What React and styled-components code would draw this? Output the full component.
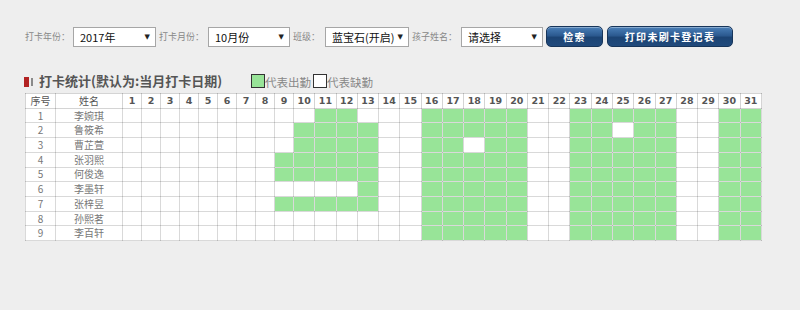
import React from "react";
import styled, { createGlobalStyle } from "styled-components";

const Global = createGlobalStyle`
  html, body { margin: 0; padding: 0; background: #eeeeee; }
  body { font-family: "Noto Sans CJK SC", "Noto Sans", sans-serif; }
`;

const Page = styled.div`
  padding: 26px 0 0 25px;
  width: 775px;
  box-sizing: border-box;
`;

const FilterBar = styled.div`
  display: flex;
  align-items: center;
  height: 21px;
  margin-left: -3px;
`;

const Label = styled.span`
  width: ${(p) => p.$w}px;
  box-sizing: border-box;
  padding-left: 3px;
  font-size: 9px;
  color: #888;
  white-space: nowrap;
  line-height: 20px;
`;

const SelectBox = styled.div`
  width: ${(p) => p.$w}px;
  height: 20px;
  box-sizing: border-box;
  border: 1px solid #a6a6a6;
  background: #fff;
  display: flex;
  align-items: center;
  justify-content: space-between;
  padding: 0 5px 0 6px;
  font-size: 11px;
  color: #111;
`;

const Caret = styled.span`
  font-size: 7px;
  color: #222;
  font-family: "DejaVu Sans", sans-serif;
`;

const Button = styled.button`
  width: ${(p) => p.$w}px;
  margin-left: ${(p) => p.$ml}px;
  height: 21px;
  box-sizing: border-box;
  border: 1px solid #17355a;
  border-radius: 5px;
  background: linear-gradient(#4a7fb8 0%, #2c5a90 45%, #1c4474 55%, #204a7c 100%);
  box-shadow: inset 0 1px 0 rgba(255, 255, 255, 0.35);
  color: #fff;
  font-family: "Noto Sans CJK SC", sans-serif;
  font-size: 10px;
  font-weight: bold;
  letter-spacing: 1.3px;
  padding: 0;
  cursor: pointer;
`;

const TitleRow = styled.div`
  display: flex;
  align-items: flex-end;
  height: 18px;
  margin-top: 25px;
`;

const TitleMark = styled.span`
  display: flex;
  align-items: center;
  gap: 2px;
  margin-right: 6px;
  margin-left: -1px;
  height: 16px;
`;

const RedBar = styled.span`
  width: 5px;
  height: 10px;
  background: #b22222;
`;

const GrayBar = styled.span`
  width: 2px;
  height: 8px;
  background: #8a8a8a;
`;

const Title = styled.span`
  font-size: 13px;
  font-weight: bold;
  color: #555;
  line-height: 18px;
`;

const Legend = styled.span`
  display: flex;
  align-items: flex-end;
  margin-left: 29px;
`;

const Swatch = styled.span`
  width: 14px;
  height: 14px;
  box-sizing: border-box;
  border: 1px solid #333;
  background: ${(p) => (p.$on ? "#98e498" : "#fff")};
  margin-bottom: 2px;
`;

const LegendText = styled.span`
  font-size: 11.5px;
  color: #888;
  line-height: 16px;
  margin-right: 2px;
`;

const Table = styled.table`
  margin-top: 3px;
  width: 737px;
  table-layout: fixed;
  border-collapse: collapse;
  background: #fff;
  border: 1px solid #c8c8c8;
`;

const Row = styled.tr`
  height: 14.73px;
`;

const HeadCell = styled.th`
  height: 13.7px;
  padding: 0;
  border: 1px solid rgba(0, 0, 0, 0.17);
  font-size: ${(p) => (p.$cjk ? "10px" : "9.5px")};
  font-family: ${(p) =>
    p.$cjk ? '"Noto Sans CJK SC", sans-serif' : '"DejaVu Sans", sans-serif'};
  font-weight: ${(p) => (p.$cjk ? "normal" : "bold")};
  color: #555;
  text-align: center;
  line-height: 12px;
  overflow: hidden;
`;

const Cell = styled.td`
  height: 13.7px;
  padding: 0;
  border: 1px solid rgba(0, 0, 0, 0.15);
  background: ${(p) => (p.$on ? "#98e498" : "transparent")};
  font-size: 10px;
  color: #777;
  text-align: center;
  line-height: 12px;
  overflow: hidden;
`;

const names = ["李婉琪", "鲁筱希", "曹芷萱", "张羽熙", "何俊逸", "李墨轩", "张梓昱", "孙熙茗", "李百轩"];

const range = (a, b) => Array.from({ length: b - a + 1 }, (_, i) => a + i);
const base = [...range(16, 20), ...range(23, 27), 30, 31];
const extra = [
  { add: [11, 12] },
  { add: range(10, 13), remove: [25] },
  { add: range(10, 13), remove: [18] },
  { add: range(9, 13) },
  { add: range(9, 13) },
  { add: [13] },
  { add: range(9, 13) },
  { add: [] },
  { add: [] },
];

const rows = names.map((n, i) => {
  const set = new Set([...base, ...extra[i].add]);
  (extra[i].remove || []).forEach((d) => set.delete(d));
  return { n, set };
});

const days = range(1, 31);

export default function App() {
  return (
    <>
      <Global />
      <Page>
        <FilterBar>
          <Label $w={51}>打卡年份：</Label>
          <SelectBox $w={83}>
            <span>2017年</span>
            <Caret>▼</Caret>
          </SelectBox>
          <Label $w={52}>打卡月份：</Label>
          <SelectBox $w={82}>
            <span>10月份</span>
            <Caret>▼</Caret>
          </SelectBox>
          <Label $w={35}>班级：</Label>
          <SelectBox $w={84}>
            <span>蓝宝石(开启)</span>
            <Caret>▼</Caret>
          </SelectBox>
          <Label $w={52}>孩子姓名：</Label>
          <SelectBox $w={82}>
            <span>请选择</span>
            <Caret>▼</Caret>
          </SelectBox>
          <Button $w={57} $ml={3}>检索</Button>
          <Button $w={126} $ml={4}>打印未刷卡登记表</Button>
        </FilterBar>

        <TitleRow>
          <TitleMark>
            <RedBar />
            <GrayBar />
          </TitleMark>
          <Title>打卡统计(默认为:当月打卡日期)</Title>
          <Legend>
            <Swatch $on />
            <LegendText>代表出勤</LegendText>
            <Swatch />
            <LegendText>代表缺勤</LegendText>
          </Legend>
        </TitleRow>

        <Table>
          <colgroup>
            <col style={{ width: 30 }} />
            <col style={{ width: 67 }} />
            {days.map((d) => (
              <col key={d} style={d < 10 ? { width: 19 } : undefined} />
            ))}
          </colgroup>
          <thead>
            <Row>
              <HeadCell $cjk>序号</HeadCell>
              <HeadCell $cjk>姓名</HeadCell>
              {days.map((d) => (
                <HeadCell key={d}>{d}</HeadCell>
              ))}
            </Row>
          </thead>
          <tbody>
            {rows.map((r, i) => (
              <Row key={r.n}>
                <Cell>{i + 1}</Cell>
                <Cell>{r.n}</Cell>
                {days.map((d) => (
                  <Cell key={d} $on={r.set.has(d)} />
                ))}
              </Row>
            ))}
          </tbody>
        </Table>
      </Page>
    </>
  );
}
